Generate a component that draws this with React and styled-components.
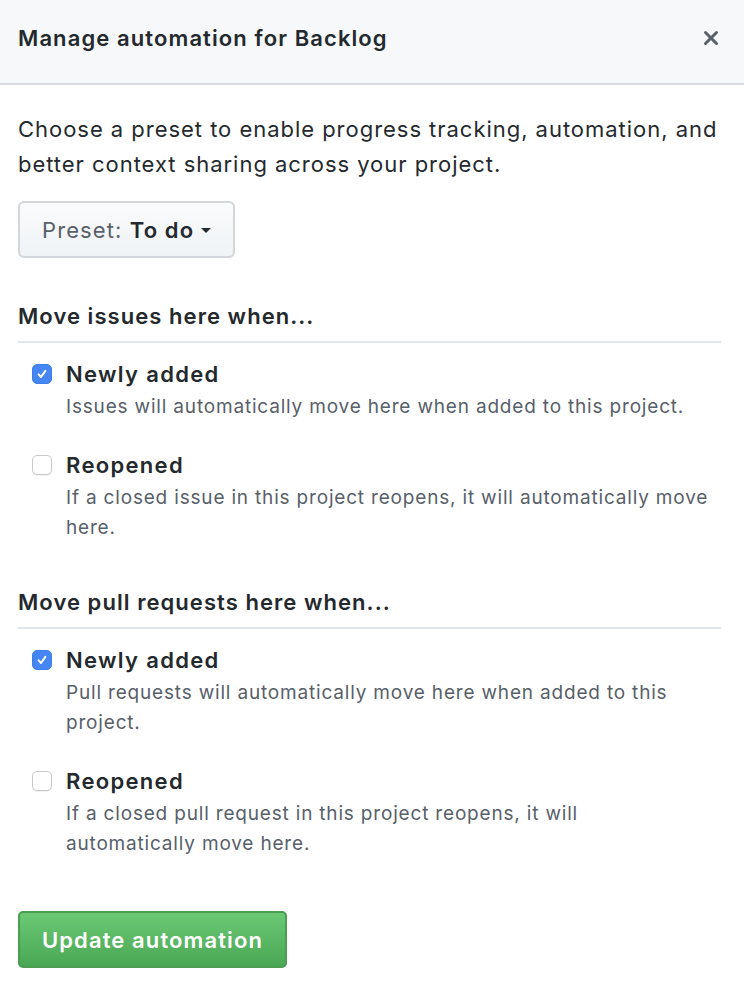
import React from "react";
import styled, { createGlobalStyle } from "styled-components";

const GlobalStyle = createGlobalStyle`
  html, body {
    margin: 0;
    padding: 0;
    background: #fff;
  }
  body {
    font-family: Inter, "Noto Sans", "Liberation Sans", sans-serif;
    color: #24292e;
    letter-spacing: 0.045em;
    -webkit-font-smoothing: antialiased;
  }
`;

const Dialog = styled.div`
  width: 744px;
  min-height: 992px;
  background: #fff;
`;

const Header = styled.div`
  height: 85px;
  display: flex;
  align-items: center;
  justify-content: space-between;
  padding: 0 21px 7px 18px;
  box-sizing: border-box;
  background: #f6f8fa;
  border-bottom: 2px solid #d8dbe0;
`;

const Title = styled.h1`
  margin: 0;
  font-size: 22px;
  font-weight: 600;
  line-height: 30px;
  letter-spacing: 0.05em;
`;

const CloseButton = styled.button`
  border: 0;
  background: transparent;
  padding: 0;
  width: 24px;
  height: 24px;
  display: flex;
  align-items: center;
  justify-content: center;
  color: #586069;
  cursor: pointer;
`;

const Body = styled.div`
  padding: 27px 23px 40px 18px;
`;

const Intro = styled.p`
  margin: 0 -4px 0 0;
  font-size: 22px;
  line-height: 35px;
  letter-spacing: 0.044em;
`;

const PresetButton = styled.button`
  margin-top: 19px;
  height: 57px;
  padding: 0 22px;
  display: inline-flex;
  align-items: center;
  gap: 7px;
  font-family: inherit;
  font-size: 22px;
  letter-spacing: 0.05em;
  color: #586069;
  background: linear-gradient(#fafbfc, #eff3f6);
  border: 2px solid #d3d6da;
  border-radius: 6px;
  cursor: pointer;
`;

const PresetValue = styled.strong`
  color: #24292e;
  font-weight: 600;
`;

const Caret = styled.span`
  display: inline-block;
  width: 0;
  height: 0;
  margin-top: 2px;
  border-left: 5px solid transparent;
  border-right: 5px solid transparent;
  border-top: 5px solid #24292e;
`;

const Section = styled.section`
  margin-top: ${(p) => p.$top}px;
`;

const SectionTitle = styled.h2`
  margin: 0;
  font-size: 22px;
  font-weight: 600;
  line-height: 35px;
  letter-spacing: 0.048em;
  padding-bottom: 7px;
  border-bottom: 2px solid #e1e4e8;
`;

const OptionList = styled.div`
  display: flex;
  flex-direction: column;
  gap: 26px;
  padding-top: 14px;
`;

const Option = styled.label`
  display: grid;
  grid-template-columns: 20px 1fr;
  column-gap: 14px;
  padding: 0 10px 0 14px;
  cursor: pointer;
`;

const Box = styled.span`
  width: 20px;
  height: 20px;
  margin-top: 7px;
  box-sizing: border-box;
  border-radius: 5px;
  display: flex;
  align-items: center;
  justify-content: center;
  background: ${(p) => (p.$checked ? "#4686f2" : "#fff")};
  border: 1px solid ${(p) => (p.$checked ? "#3f7fe9" : "#c8c8c8")};
  box-shadow: ${(p) => (p.$checked ? "none" : "0 1px 1px rgba(0,0,0,0.06)")};
`;

const OptionText = styled.div`
  display: flex;
  flex-direction: column;
`;

const OptionLabel = styled.span`
  font-size: 22px;
  font-weight: 600;
  line-height: 35px;
  letter-spacing: 0.06em;
`;

const Note = styled.span`
  font-size: 19px;
  line-height: 30px;
  color: #586069;
  letter-spacing: 0.043em;
`;

const SubmitButton = styled.button`
  margin-top: 52px;
  height: 57px;
  padding: 0 22px;
  font-family: inherit;
  font-size: 22px;
  font-weight: 600;
  letter-spacing: 0.05em;
  color: #fff;
  background: linear-gradient(#6bc873, #4aa755);
  border: 2px solid #4a9e52;
  border-radius: 5px;
  cursor: pointer;
`;

const Check = () => (
  <svg width="14" height="14" viewBox="0 0 14 14" fill="none">
    <path
      d="M3.6 7.4 L6 10 L10.4 3.8"
      stroke="#fff"
      strokeWidth="2"
      strokeLinecap="round"
      strokeLinejoin="round"
    />
  </svg>
);

const sections = [
  {
    title: "Move issues here when...",
    top: 41,
    options: [
      {
        label: "Newly added",
        note: "Issues will automatically move here when added to this project.",
        checked: true,
      },
      {
        label: "Reopened",
        note: "If a closed issue in this project reopens, it will automatically move here.",
        checked: false,
      },
    ],
  },
  {
    title: "Move pull requests here when...",
    top: 42,
    options: [
      {
        label: "Newly added",
        note: "Pull requests will automatically move here when added to this project.",
        checked: true,
      },
      {
        label: "Reopened",
        note: "If a closed pull request in this project reopens, it will automatically move here.",
        checked: false,
      },
    ],
  },
];

const App = () => {
  return (
    <Dialog>
      <GlobalStyle />
      <Header>
        <Title>Manage automation for Backlog</Title>
        <CloseButton aria-label="Close">
          <svg width="16" height="16" viewBox="0 0 16 16">
            <path
              d="M2.5 2.5 L13.5 13.5 M13.5 2.5 L2.5 13.5"
              stroke="currentColor"
              strokeWidth="3"
              strokeLinecap="round"
            />
          </svg>
        </CloseButton>
      </Header>
      <Body>
        <Intro>
          Choose a preset to enable progress tracking, automation, and better
          context sharing across your project.
        </Intro>
        <PresetButton>
          <span>
            Preset: <PresetValue>To do</PresetValue>
          </span>
          <Caret />
        </PresetButton>
        {sections.map((s) => (
          <Section key={s.title} $top={s.top}>
            <SectionTitle>{s.title}</SectionTitle>
            <OptionList>
              {s.options.map((o) => (
                <Option key={o.label}>
                  <Box $checked={o.checked}>{o.checked && <Check />}</Box>
                  <OptionText>
                    <OptionLabel>{o.label}</OptionLabel>
                    <Note>{o.note}</Note>
                  </OptionText>
                </Option>
              ))}
            </OptionList>
          </Section>
        ))}
        <SubmitButton>Update automation</SubmitButton>
      </Body>
    </Dialog>
  );
};

export default App;
